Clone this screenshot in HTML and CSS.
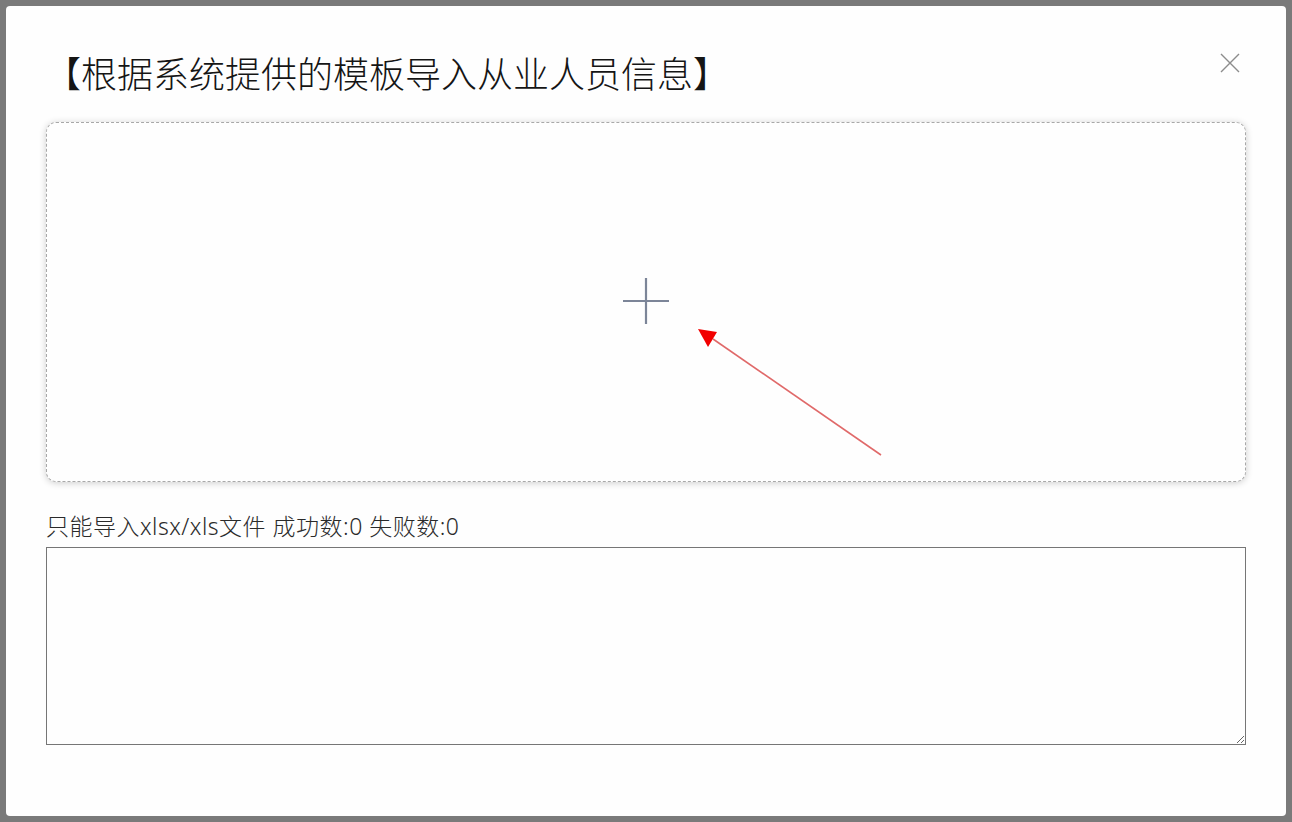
FILE: index.html
```html
<!DOCTYPE html>
<html lang="zh-CN">
<head>
<meta charset="utf-8">
<title>导入从业人员信息</title>
<link rel="stylesheet" href="styles.css">
</head>
<body>
<div class="dialog">
  <div class="dialog-header">
    <h1 class="dialog-title">【根据系统提供的模板导入从业人员信息】</h1>
    <button class="close-btn" aria-label="关闭">
      <svg width="20" height="20" viewBox="0 0 20 20"><path d="M1 1L19 19M19 1L1 19" stroke="#8c8c8c" stroke-width="1.4" fill="none"/></svg>
    </button>
  </div>
  <div class="upload-box">
    <svg class="plus" width="46" height="46" viewBox="0 0 46 46"><path d="M23 0V46M0 23H46" stroke="#7c8598" stroke-width="2.2" fill="none"/></svg>
    <svg class="annotation" width="1198" height="358" viewBox="0 0 1198 358">
      <line x1="666" y1="216" x2="834" y2="332" stroke="#fff" stroke-width="5" stroke-linecap="round"/>
      <polygon points="651,206 670,209 661,224" fill="#fff" stroke="#fff" stroke-width="4" stroke-linejoin="round"/>
      <line x1="666" y1="216" x2="834" y2="332" stroke="#e06a6a" stroke-width="1.6"/>
      <polygon points="651,206 670,209 661,224" fill="#f20000"/>
    </svg>
  </div>
  <div class="status">只能导入xlsx/xls文件 成功数:0 失败数:0</div>
  <textarea class="result"></textarea>
</div>
</body>
</html>
```
FILE: styles.css
```css
html, body {
  margin: 0;
  padding: 0;
}
body {
  background: #7a7a7a;
  width: 1292px;
  height: 822px;
  overflow: hidden;
  font-family: "Noto Sans CJK SC", "Noto Sans", sans-serif;
}
.dialog {
  position: relative;
  margin: 6px;
  width: 1280px;
  height: 810px;
  box-sizing: border-box;
  background: #fefefe;
  border-radius: 4px;
  padding: 45px 40px 0 40px;
  display: flex;
  flex-direction: column;
}
.dialog-header {
  height: 42px;
  display: flex;
  align-items: center;
}
.dialog-title {
  margin: 0 0 0 -1px;
  font-size: 36px;
  line-height: 42px;
  font-weight: 300;
  color: #151515;
  letter-spacing: 0;
  white-space: nowrap;
}
.close-btn {
  position: absolute;
  top: 47px;
  right: 46px;
  width: 20px;
  height: 20px;
  padding: 0;
  border: 0;
  background: transparent;
  display: flex;
}
.upload-box {
  position: relative;
  margin-top: 29px;
  height: 360px;
  box-sizing: border-box;
  border: 1px dashed #a8a8a8;
  border-radius: 10px;
  box-shadow: 0 1px 7px rgba(0, 0, 0, 0.2);
  background: #fefefe;
  display: flex;
  align-items: center;
  justify-content: center;
}
.plus {
  margin-top: -2px;
}
.annotation {
  position: absolute;
  left: 0;
  top: 0;
  pointer-events: none;
}
.status {
  margin-top: 30px;
  margin-left: 0;
  font-family: "Noto Sans", "Noto Sans CJK SC", sans-serif;
  font-size: 23px;
  line-height: 28px;
  font-weight: 300;
  letter-spacing: 0.5px;
  color: #2a2a2a;
  white-space: nowrap;
}
.result {
  margin-top: 7px;
  width: 1200px;
  height: 198px;
  box-sizing: border-box;
  border: 1px solid #767676;
  border-radius: 0;
  background: #fefefe;
  resize: vertical;
  font-family: "Noto Sans CJK SC", sans-serif;
}
```
